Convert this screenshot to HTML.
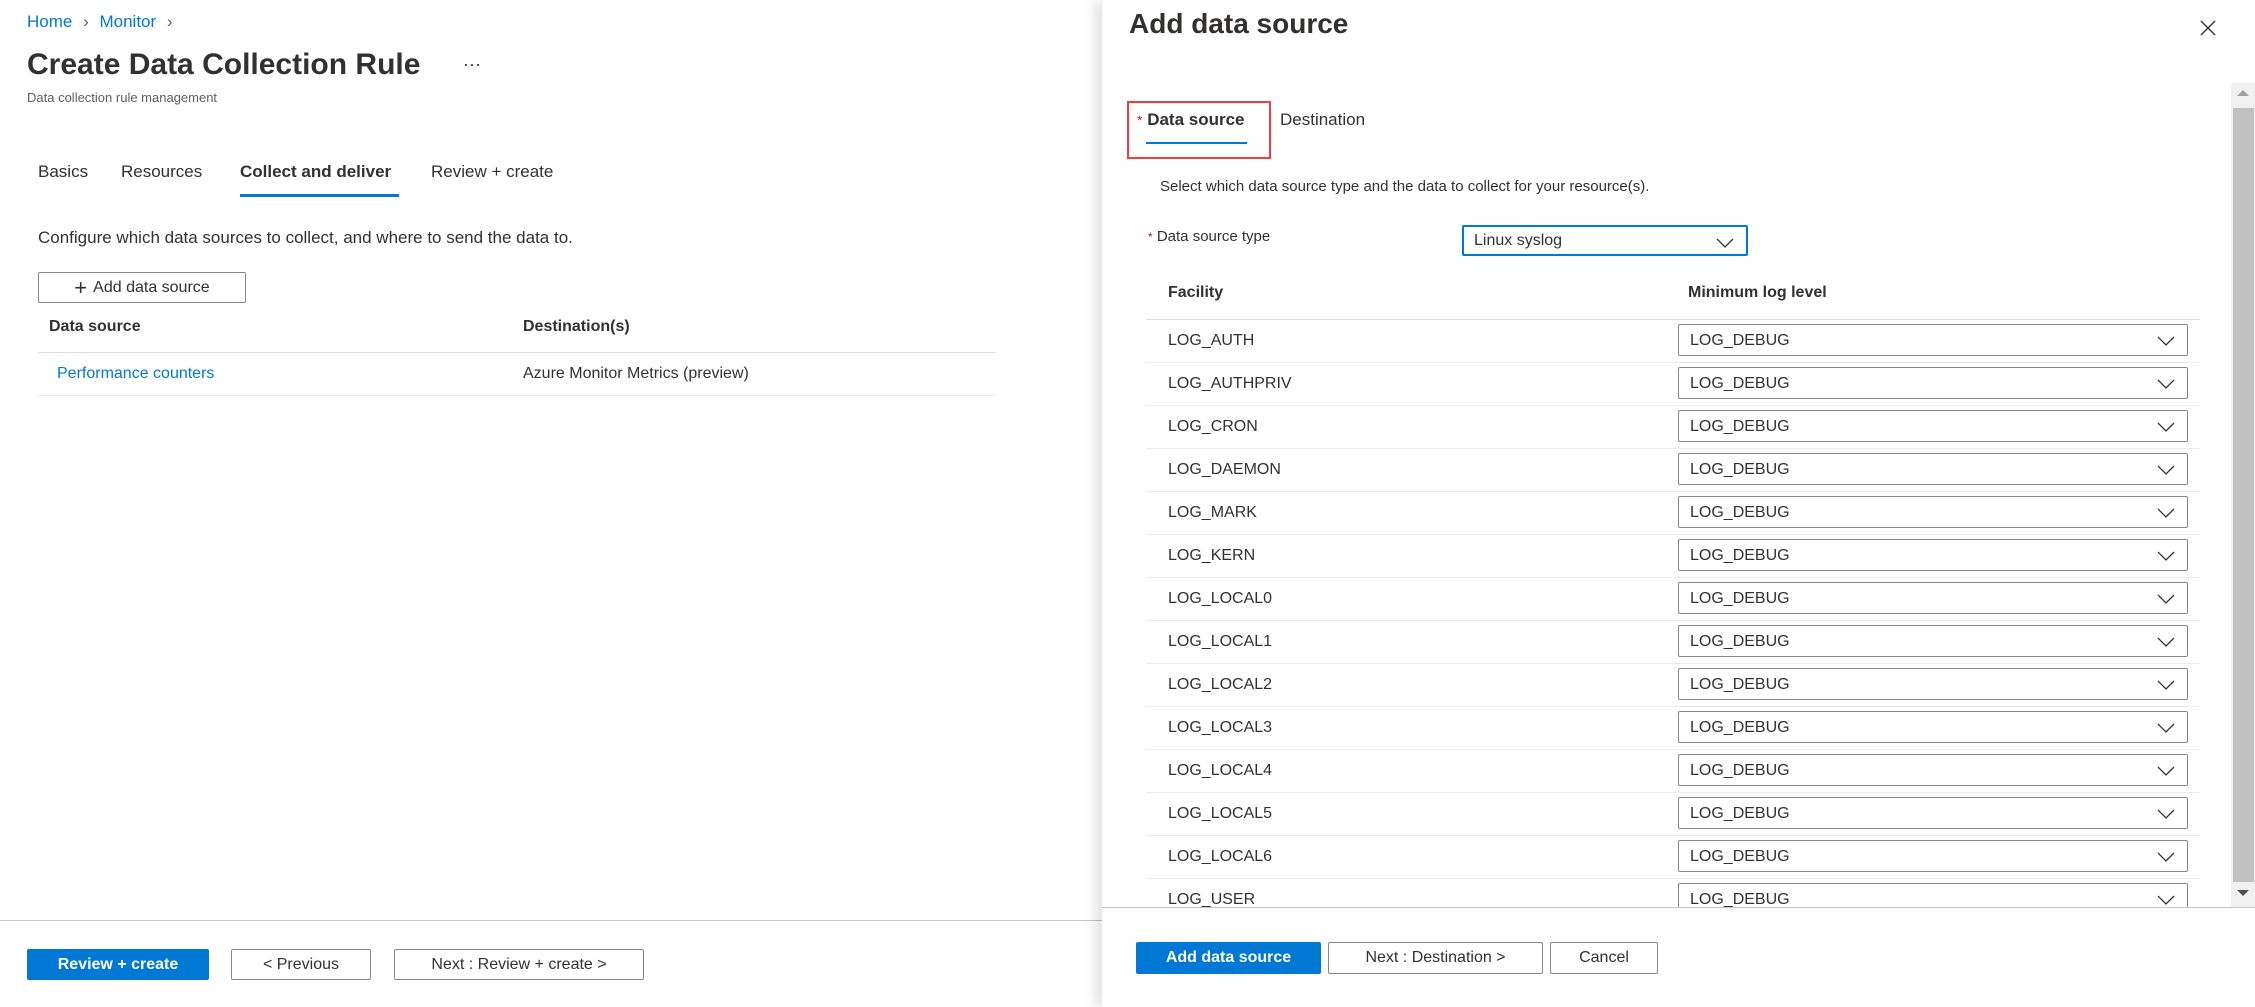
<!DOCTYPE html>
<html><head><meta charset="utf-8"><style>
*{box-sizing:border-box;margin:0;padding:0}
html,body{width:2255px;height:1007px;overflow:hidden}
body{position:relative;background:#fff;font-family:"Segoe UI","Liberation Sans",sans-serif;color:#323130}
.a{position:absolute;white-space:nowrap}
.btn{position:absolute;border:1px solid #8a8886;border-radius:2px;background:#fff;font-size:16px;display:flex;align-items:center;justify-content:center;color:#323130}
.pri{background:#0078d4;border-color:#0078d4;color:#fff;font-weight:600}
.dd{position:absolute;left:1678px;width:510px;height:32px;border:1px solid #8a8886;border-radius:2px;font-size:16px;padding-left:11px;line-height:32px}
.dd svg,.ds svg{position:absolute;right:12px;top:11px}
.fac{position:absolute;left:1168px;font-size:16px;line-height:20px}
.rl{position:absolute;left:1146px;width:1054px;height:1px;background:#edebe9}
</style></head><body>
<div class="a" style="left:27px;top:12px;font-size:17px;color:#0078d4">Home <span style="color:#605e5c;margin:0 6px">&#x203A;</span> Monitor <span style="color:#605e5c;margin-left:6px">&#x203A;</span></div>
<div class="a" style="left:27px;top:48px;font-size:30px;font-weight:600;color:#323130">Create Data Collection Rule</div>
<div class="a" style="left:463px;top:54px;font-size:18px">···</div>
<div class="a" style="left:27px;top:90px;font-size:13px;color:#605e5c">Data collection rule management</div>
<div class="a" style="left:38px;top:162px;font-size:17px">Basics</div>
<div class="a" style="left:121px;top:162px;font-size:17px">Resources</div>
<div class="a" style="left:240px;top:162px;font-size:17px;font-weight:600">Collect and deliver</div>
<div class="a" style="left:240px;top:194px;width:159px;height:3px;background:#0078d4"></div>
<div class="a" style="left:431px;top:162px;font-size:17px">Review + create</div>
<div class="a" style="left:38px;top:228px;font-size:17px">Configure which data sources to collect, and where to send the data to.</div>
<div class="btn" style="left:38px;top:272px;width:208px;height:31px;font-size:16px"><span style="font-size:22px;font-weight:300;margin-right:6px;line-height:1">+</span>Add data source</div>
<div class="a" style="left:49px;top:318px;font-size:16px;font-weight:600">Data source</div>
<div class="a" style="left:523px;top:318px;font-size:16px;font-weight:600">Destination(s)</div>
<div class="a" style="left:38px;top:352px;width:958px;height:1px;background:#e1dfdd"></div>
<div class="a" style="left:57px;top:365px;font-size:16px;color:#0078d4">Performance counters</div>
<div class="a" style="left:523px;top:365px;font-size:16px">Azure Monitor Metrics (preview)</div>
<div class="a" style="left:38px;top:395px;width:958px;height:1px;background:#edebe9"></div>
<div class="a" style="left:0;top:920px;width:1102px;height:1px;background:#c8c6c4"></div>
<div class="btn pri" style="left:27px;top:949px;width:182px;height:31px">Review + create</div>
<div class="btn" style="left:231px;top:949px;width:140px;height:31px">&lt; Previous</div>
<div class="btn" style="left:394px;top:949px;width:250px;height:31px">Next : Review + create &gt;</div>
<div class="a" style="left:1102px;top:0;width:1153px;height:1007px;background:#fff;box-shadow:-6px 0 14px rgba(0,0,0,.13)"></div>
<div class="a" style="left:1129px;top:8px;font-size:28px;font-weight:600">Add data source</div>
<svg class="a" style="left:2200px;top:20px" width="16" height="16" viewBox="0 0 16 16"><path d="M1 1L15 15M15 1L1 15" stroke="#323130" stroke-width="1.4"/></svg>
<div class="a" style="left:2231px;top:83px;width:24px;height:824px;background:#f0f0f0"></div>
<div class="a" style="left:2233px;top:108px;width:21px;height:774px;background:#c1c1c1"></div>
<svg class="a" style="left:2237px;top:89px" width="12" height="8"><path d="M0 7L6 1L12 7Z" fill="#a0a0a0"/></svg>
<svg class="a" style="left:2237px;top:889px" width="12" height="8"><path d="M0 1L6 7L12 1Z" fill="#505050"/></svg>
<div class="a" style="left:1127px;top:101px;width:144px;height:58px;border:2px solid #f03e3e"></div>
<div class="a" style="left:1137px;top:110px;font-size:17px"><span style="color:#a4262c;font-size:14px">*</span> <span style="font-weight:600">Data source</span></div>
<div class="a" style="left:1146px;top:142px;width:101px;height:2px;background:#0078d4"></div>
<div class="a" style="left:1280px;top:110px;font-size:17px">Destination</div>
<div class="a" style="left:1160px;top:178px;font-size:15px">Select which data source type and the data to collect for your resource(s).</div>
<div class="a" style="left:1148px;top:228px;font-size:15px"><span style="color:#a4262c;font-size:12px">*</span> Data source type</div>
<div class="ds a" style="left:1462px;top:225px;width:286px;height:31px;border:2px solid #0078d4;border-radius:2px;font-size:16px;padding-left:10px;line-height:27px">Linux syslog<svg width="18" height="10"><path d="M1 1L9 9L17 1" fill="none" stroke="#323130" stroke-width="1.3"/></svg></div>
<div class="a" style="left:1168px;top:284px;font-size:16px;font-weight:600">Facility</div>
<div class="a" style="left:1688px;top:284px;font-size:16px;font-weight:600">Minimum log level</div>
<div class="rl" style="top:319px;background:#e1dfdd"></div>
<div class="a" style="left:1102px;top:83px;width:1129px;height:824px;overflow:hidden">
<div style="position:absolute;left:-1102px;top:-83px;width:2255px;height:907px">
<div class="fac" style="top:331px">LOG_AUTH</div><div class="dd" style="top:324px">LOG_DEBUG<svg width="18" height="10"><path d="M1 1L9 9L17 1" fill="none" stroke="#323130" stroke-width="1.3"/></svg></div><div class="rl" style="top:362px"></div>
<div class="fac" style="top:374px">LOG_AUTHPRIV</div><div class="dd" style="top:367px">LOG_DEBUG<svg width="18" height="10"><path d="M1 1L9 9L17 1" fill="none" stroke="#323130" stroke-width="1.3"/></svg></div><div class="rl" style="top:405px"></div>
<div class="fac" style="top:417px">LOG_CRON</div><div class="dd" style="top:410px">LOG_DEBUG<svg width="18" height="10"><path d="M1 1L9 9L17 1" fill="none" stroke="#323130" stroke-width="1.3"/></svg></div><div class="rl" style="top:448px"></div>
<div class="fac" style="top:460px">LOG_DAEMON</div><div class="dd" style="top:453px">LOG_DEBUG<svg width="18" height="10"><path d="M1 1L9 9L17 1" fill="none" stroke="#323130" stroke-width="1.3"/></svg></div><div class="rl" style="top:491px"></div>
<div class="fac" style="top:503px">LOG_MARK</div><div class="dd" style="top:496px">LOG_DEBUG<svg width="18" height="10"><path d="M1 1L9 9L17 1" fill="none" stroke="#323130" stroke-width="1.3"/></svg></div><div class="rl" style="top:534px"></div>
<div class="fac" style="top:546px">LOG_KERN</div><div class="dd" style="top:539px">LOG_DEBUG<svg width="18" height="10"><path d="M1 1L9 9L17 1" fill="none" stroke="#323130" stroke-width="1.3"/></svg></div><div class="rl" style="top:577px"></div>
<div class="fac" style="top:589px">LOG_LOCAL0</div><div class="dd" style="top:582px">LOG_DEBUG<svg width="18" height="10"><path d="M1 1L9 9L17 1" fill="none" stroke="#323130" stroke-width="1.3"/></svg></div><div class="rl" style="top:620px"></div>
<div class="fac" style="top:632px">LOG_LOCAL1</div><div class="dd" style="top:625px">LOG_DEBUG<svg width="18" height="10"><path d="M1 1L9 9L17 1" fill="none" stroke="#323130" stroke-width="1.3"/></svg></div><div class="rl" style="top:663px"></div>
<div class="fac" style="top:675px">LOG_LOCAL2</div><div class="dd" style="top:668px">LOG_DEBUG<svg width="18" height="10"><path d="M1 1L9 9L17 1" fill="none" stroke="#323130" stroke-width="1.3"/></svg></div><div class="rl" style="top:706px"></div>
<div class="fac" style="top:718px">LOG_LOCAL3</div><div class="dd" style="top:711px">LOG_DEBUG<svg width="18" height="10"><path d="M1 1L9 9L17 1" fill="none" stroke="#323130" stroke-width="1.3"/></svg></div><div class="rl" style="top:749px"></div>
<div class="fac" style="top:761px">LOG_LOCAL4</div><div class="dd" style="top:754px">LOG_DEBUG<svg width="18" height="10"><path d="M1 1L9 9L17 1" fill="none" stroke="#323130" stroke-width="1.3"/></svg></div><div class="rl" style="top:792px"></div>
<div class="fac" style="top:804px">LOG_LOCAL5</div><div class="dd" style="top:797px">LOG_DEBUG<svg width="18" height="10"><path d="M1 1L9 9L17 1" fill="none" stroke="#323130" stroke-width="1.3"/></svg></div><div class="rl" style="top:835px"></div>
<div class="fac" style="top:847px">LOG_LOCAL6</div><div class="dd" style="top:840px">LOG_DEBUG<svg width="18" height="10"><path d="M1 1L9 9L17 1" fill="none" stroke="#323130" stroke-width="1.3"/></svg></div><div class="rl" style="top:878px"></div>
<div class="fac" style="top:890px">LOG_USER</div><div class="dd" style="top:883px">LOG_DEBUG<svg width="18" height="10"><path d="M1 1L9 9L17 1" fill="none" stroke="#323130" stroke-width="1.3"/></svg></div>
</div></div>
<div class="a" style="left:1102px;top:907px;width:1153px;height:1px;background:#c8c6c4"></div>
<div class="btn pri" style="left:1136px;top:942px;width:185px;height:32px">Add data source</div>
<div class="btn" style="left:1328px;top:942px;width:215px;height:32px">Next : Destination &gt;</div>
<div class="btn" style="left:1550px;top:942px;width:108px;height:32px">Cancel</div>
</body></html>
